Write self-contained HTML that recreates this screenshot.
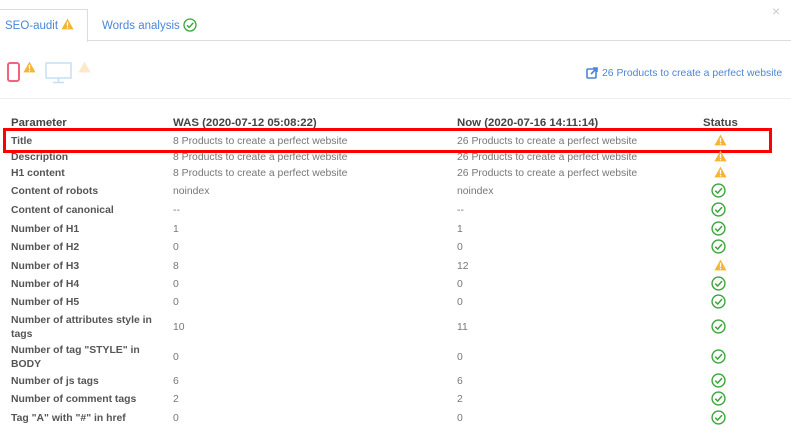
<!DOCTYPE html>
<html><head><meta charset="utf-8"><style>
body{margin:0;width:791px;height:435px;background:#fff;font-family:"Liberation Sans",Arial,sans-serif;position:relative;overflow:hidden}
.a{position:absolute;white-space:nowrap;line-height:14px}
.p{left:11px;font-size:10.4px;font-weight:bold;color:#555}
.w{left:173px;font-size:10.4px;color:#777}
.n{left:457px;font-size:10.4px;color:#777}
.s{left:711px}
.h{font-size:11.4px;font-weight:bold;color:#444}
</style></head><body>
<div style="position:absolute;left:0;top:40px;width:791px;border-top:1px solid #ddd"></div>
<div style="position:absolute;left:-1px;top:9px;width:87px;height:32px;border:1px solid #ddd;border-bottom:none;background:#fff"></div>
<div class="a" style="left:5px;top:18px;font-size:11.5px;color:#4a86d8">SEO-audit <svg width="13" height="12" viewBox="0 0 12 11" style="vertical-align:-1px"><path d="M6 0.5L11.6 10.5H0.4Z" fill="#f5b531"/><rect x="5.4" y="3.5" width="1.2" height="4" fill="#fff"/><rect x="5.4" y="8.3" width="1.2" height="1.2" fill="#fff"/></svg></div>
<div class="a" style="left:102px;top:18px;font-size:11.5px;color:#4a86d8">Words analysis <svg width="14" height="14" viewBox="0 0 14 14" style="vertical-align:-3px"><circle cx="7" cy="7" r="6" fill="none" stroke="#3aa53a" stroke-width="1.3"/><path d="M4 7.2L6.2 9.4L10.3 4.8" fill="none" stroke="#3aa53a" stroke-width="1.4"/></svg></div>
<div class="a" style="left:772px;top:4px;font-size:14px;color:#ccc">×</div>
<svg style="position:absolute;left:7px;top:62px" width="14" height="20"><rect x="1" y="1" width="11" height="18" rx="2" fill="none" stroke="#f0627e" stroke-width="2"/></svg>
<svg style="position:absolute;left:23px;top:61px" width="13" height="12" viewBox="0 0 12 11"><path d="M6 0.5L11.6 10.5H0.4Z" fill="#f5b531"/><rect x="5.4" y="3.5" width="1.2" height="4" fill="#fff"/><rect x="5.4" y="8.3" width="1.2" height="1.2" fill="#fff"/></svg>
<svg style="position:absolute;left:45px;top:62px" width="28" height="22"><rect x="1" y="1" width="25" height="15" fill="none" stroke="#c7ddf0" stroke-width="1.5"/><path d="M13.5 16V20M8 20.5H19" stroke="#c7ddf0" stroke-width="1.5"/></svg>
<svg style="position:absolute;left:78px;top:61px" width="13" height="12" viewBox="0 0 12 11"><path d="M6 0.5L11.6 10.5H0.4Z" fill="#fbe9c9"/></svg>
<svg style="position:absolute;left:586px;top:67px" width="12" height="12"><rect x="1" y="2" width="9" height="9" rx="1" fill="none" stroke="#4a86d8" stroke-width="1.6"/><path d="M5 7L11 1M7 1H11V5" fill="none" stroke="#4a86d8" stroke-width="1.6"/></svg>
<div class="a" style="left:602px;top:67px;font-size:10.4px;color:#4a86d8">26 Products to create a perfect website</div>
<div style="position:absolute;left:0;top:98px;width:791px;border-top:1px solid #eee"></div>
<div class="a p h" style="top:116px">Parameter</div>
<div class="a h" style="left:173px;top:116px">WAS (2020-07-12 05:08:22)</div>
<div class="a h" style="left:457px;top:116px">Now (2020-07-16 14:11:14)</div>
<div class="a h" style="left:703px;top:116px">Status</div>
<div style="position:absolute;left:3px;top:128px;width:763px;height:19px;border:3px solid #f00"></div>
<div id="rows"></div>
<script>
var W='<svg width="13" height="12" viewBox="0 0 12 11"><path d="M6 0.5L11.6 10.5H0.4Z" fill="#f5b531"/><rect x="5.4" y="3.5" width="1.2" height="4" fill="#fff"/><rect x="5.4" y="8.3" width="1.2" height="1.2" fill="#fff"/></svg>';
var O='<svg width="15" height="15" viewBox="0 0 14 14"><circle cx="7" cy="7" r="6" fill="none" stroke="#3aa53a" stroke-width="1.3"/><path d="M4 7.2L6.2 9.4L10.3 4.8" fill="none" stroke="#3aa53a" stroke-width="1.4"/></svg>';
var P='8 Products to create a perfect website',N='26 Products to create a perfect website';
var R=[[142,'Title',P,N,W],[158,'Description',P,N,W],[174,'H1 content',P,N,W],[192,'Content of robots','noindex','noindex',O],[211,'Content of canonical','--','--',O],[230,'Number of H1','1','1',O],[248,'Number of H2','0','0',O],[267,'Number of H3','8','12',W],[285,'Number of H4','0','0',O],[303,'Number of H5','0','0',O],[328,'Number of attributes style in<br>tags','10','11',O],[358,'Number of tag "STYLE" in<br>BODY','0','0',O],[382,'Number of js tags','6','6',O],[400,'Number of comment tags','2','2',O],[419,'Tag "A" with "#" in href','0','0',O]];
var h='';R.forEach(function(r){var two=r[1].indexOf('<br>')>0;h+='<div class="a p" style="top:'+(r[0]-(two?14:7))+'px">'+r[1]+'</div><div class="a w" style="top:'+(r[0]-7)+'px">'+r[2]+'</div><div class="a n" style="top:'+(r[0]-7)+'px">'+r[3]+'</div><div class="a s" style="top:'+(r[0]-(r[4]==W?8:9))+'px;left:'+(r[4]==W?714:711)+'px">'+r[4]+'</div>';});
document.getElementById('rows').innerHTML=h;
</script>
</body></html>
